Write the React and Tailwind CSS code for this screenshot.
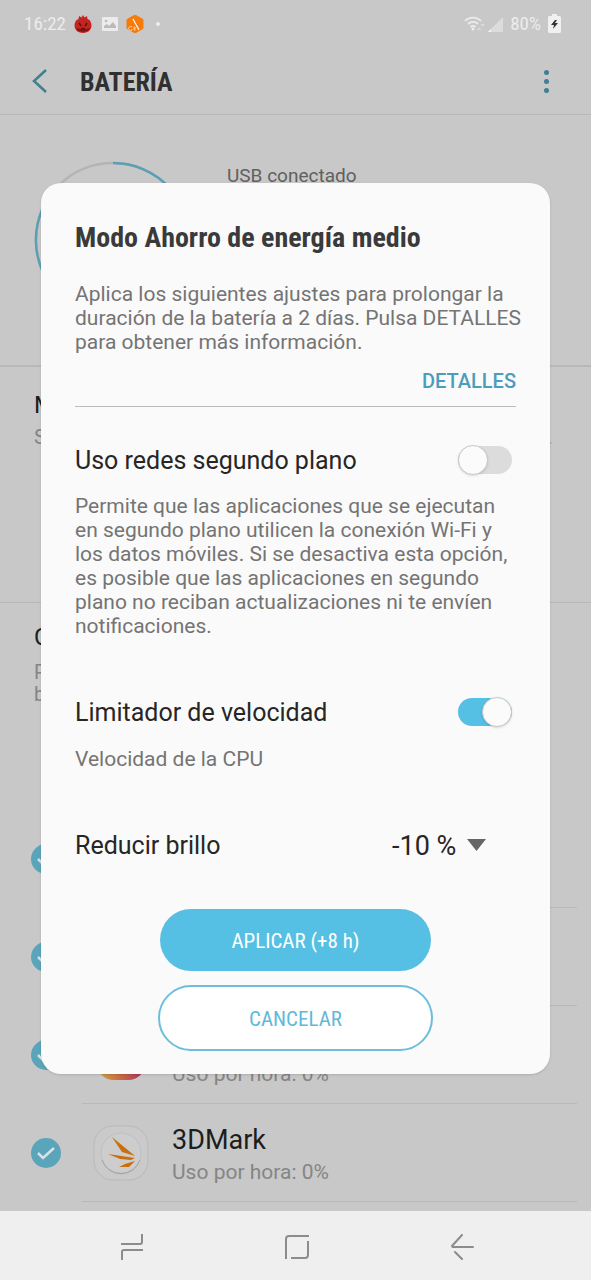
import { useState } from "react";

const apps = [
  { name: "Google", icon: "" },
  { name: "Gmail", icon: "" },
  { name: "Instagram", icon: "instagram" },
  { name: "3DMark", icon: "3dmark" },
];

const StatusBar = () => {
  return (
    <div className="flex h-12 items-center justify-between pr-[30px] pl-6 font-['Roboto_Condensed',Roboto,sans-serif] text-[19px] text-[#ececec]">
      <div className="flex items-center gap-2">
        <span>16:22</span>
        <svg className="size-[18px]" viewBox="0 0 18 18">
          <path
            d="M9 0l1.500 2.500L13 1l.5 3 2 1c4 5 2 13-6.500 13S-1.500 10 2.500 5l2-1L5 1l2.500 1.500z"
            fill="#c3241f"
          />
          <path d="M2 13c2 5 12 5 14 0l-4 1H6z" fill="#7d1413" />
          <path d="M5 8l2 3M13 8l-2 3" stroke="#5a0f0f" strokeWidth="1.500" />
          <path d="M7 14l2-1 2 1" fill="none" stroke="#4a0d0d" />
        </svg>
        <svg className="ml-0.5 h-[14px] w-[16px]" viewBox="0 0 16 14">
          <rect width="16" height="14" rx="1" fill="#ececec" />
          <path d="M2 11V9l3-2 2 2 4-4 3 4v2z" fill="#bbb" />
          <circle cx="4" cy="4" r="1.300" fill="#bbb" />
        </svg>
        <svg className="size-[18px]" viewBox="0 0 18 18">
          <path d="M9 0l8 4.500v9L9 18l-8-4.500v-9z" fill="#f57c0a" stroke="#f57c0a" strokeLinejoin="round" />
          <path d="M7 4l6 11" stroke="#fff" strokeWidth="1.200" />
          <path d="M6 12a2 2 0 1 0 0 3v-1M8 15v-3h1v3z" fill="none" stroke="#fbd0a0" />
        </svg>
        <span className="ml-1 size-1 rounded-full bg-[#ececec]" />
      </div>
      <div className="flex items-center gap-[7px]">
        <svg className="h-[18px] w-[39px]" viewBox="0 0 39 18">
          <g fill="none" stroke="#ececec" strokeWidth="1.800">
            <path d="M1 6a11 11 0 0 1 16 0M4 9a7 7 0 0 1 10 0M6.500 12a4 4 0 0 1 5 0" />
          </g>
          <circle cx="9" cy="14" r="1.500" fill="#ececec" />
          <path d="M15 12l2.500 3h-5zM16 9h5l-2.500 3z" fill="#d8d8d8" />
          <path d="M39 2v15H24z" fill="#dcdcdc" />
          <path d="M27 14v3h-3z" fill="#f4f4f4" />
        </svg>
        <span>80%</span>
        <svg className="h-5 w-[13px]" viewBox="0 0 13 20">
          <path d="M4 0h5v2h3l1 1v15l-1 1H1l-1-1V3l1-1h3z" fill="#f0f0f0" />
          <path d="M7 6l-4 5h3l-1 4 5-6H7l2-3z" fill="#333" />
        </svg>
      </div>
    </div>
  );
};

const AppIcon = ({ icon }) => {
  if (icon === "3dmark") {
    return (
      <svg className="size-14" viewBox="0 0 56 56">
        <rect x="1" y="1" width="54" height="54" rx="19" fill="#cacaca" stroke="#b9b9b9" />
        <circle cx="28" cy="28" r="20" fill="#cdcdcd" stroke="#c0c0c0" />
        <path d="M9 35a20 20 0 0 0 38 0" fill="none" stroke="#9ba3ab" />
        <path d="M19 12l23 19-13-4zM15 29l27 4-4 2-11-1zM42 36l-6 6-10 0 6-3z" fill="#c96f0b" />
      </svg>
    );
  }
  if (icon === "instagram") {
    return (
      <span className="m-[3px] size-[50px] rounded-[18px] bg-linear-to-r from-[#c9a84f] via-[#c9693e] to-[#a8205f]" />
    );
  }
  return <span className="size-14" />;
};

const AppRow = ({ app }) => {
  return (
    <li className="flex h-[98px] items-center">
      <label className="ml-[31px] flex">
        <input type="checkbox" defaultChecked aria-label={app.name} className="peer sr-only" />
        <svg className="size-[30px]" viewBox="0 0 30 30">
          <circle cx="15" cy="15" r="15" fill="#5ba5ba" />
          <path d="M7 15l5 5 11-10" fill="none" stroke="#d6e2e6" strokeWidth="2.500" />
        </svg>
      </label>
      <div className="mr-[14px] ml-[21px] flex h-full flex-1 items-center border-b border-[#b8b8b8] pl-[11px]">
        <AppIcon icon={app.icon} />
        <div className="ml-[23px] pt-1.5">
          <p className="text-[27px] leading-8 text-[#1d1d1d]">{app.name}</p>
          <p className="text-[21px] leading-8 text-[#858585]">Uso por hora: 0%</p>
        </div>
      </div>
    </li>
  );
};

const Switch = ({ id, checked, onChange }) => {
  return (
    <input
      id={id}
      type="checkbox"
      role="switch"
      checked={checked}
      onChange={(e) => onChange(e.target.checked)}
      className="mr-1 flex h-7 w-[54px] shrink-0 appearance-none items-center rounded-full bg-[#dcdcdc] before:size-[30px] before:shrink-0 before:rounded-full before:border before:border-[#c9c9c9] before:bg-[#fbfbfb] before:shadow-sm before:content-[''] checked:justify-end checked:bg-[#56bfe4]"
    />
  );
};

const BatteryPage = () => {
  return (
    <div className="flex-1 bg-[#c8c8c8]">
      <StatusBar />
      <header className="flex h-[67px] items-center border-b border-[#b8b8b8] pr-9 pl-8">
        <button aria-label="Atrás">
          <svg className="h-6 w-4" viewBox="0 0 16 24" fill="none" stroke="#3f7f92" strokeWidth="2.500">
            <path d="M14 1L2 12l12 11" />
          </svg>
        </button>
        <h1 className="ml-8 flex-1 pt-0.5 font-['Roboto_Condensed',Roboto,sans-serif] text-[26px] font-bold text-[#303030]">
          BATERÍA
        </h1>
        <button aria-label="Más opciones" className="flex w-[18px] flex-col items-center gap-1">
          <span className="size-[5px] rounded-full bg-[#3f7f92]" />
          <span className="size-[5px] rounded-full bg-[#3f7f92]" />
          <span className="size-[5px] rounded-full bg-[#3f7f92]" />
        </button>
      </header>
      <section className="flex h-[252px] items-start border-b-2 border-[#b8b8b8] pt-[46px] pl-[34px]">
        <svg className="size-[158px]" viewBox="0 0 158 158" fill="none" strokeWidth="2.500">
          <circle cx="79" cy="79" r="77" stroke="#b4b4b4" />
          <path d="M79 2A77 77 0 1 1 8 49" stroke="#5b9fb2" />
        </svg>
        <p className="ml-[35px] text-[19px] leading-[30px] text-[#606060]">USB conectado</p>
      </section>
      <section className="h-[236px] border-b border-[#b8b8b8] px-[34px] pt-[22px]">
        <h2 className="text-[24px] leading-8 text-[#1d1d1d]">Modo de energía</h2>
        <p className="text-[21px] leading-8 whitespace-nowrap text-[#858585]">
          Selecciona estos ajustes para prolongar más tu batería.
        </p>
      </section>
      <section className="pt-[18px] pb-2">
        <div className="h-[189px] px-[34px]">
          <h2 className="text-[24px] leading-8 text-[#1d1d1d]">Control de energía</h2>
          <p className="mt-2 text-[20px] leading-[22px] text-[#858585]">
            Prolonga la duración de la
            <br />
            batería del teléfono.
          </p>
        </div>
        <ul>
          {apps.map((app) => (
            <AppRow key={app.name} app={app} />
          ))}
        </ul>
      </section>
    </div>
  );
};

const NavBar = () => {
  return (
    <nav className="flex h-[69px] items-center justify-between bg-[#efefef] pt-0.5 pr-[117px] pl-[120px] text-[#8c8c8c]">
      <button aria-label="Recientes">
        <svg className="h-[26px] w-6" viewBox="0 0 24 26" fill="none" stroke="currentColor" strokeWidth="2">
          <path d="M1 10h19q2 0 2-2V0M23 16H4q-2 0-2 2v8" />
        </svg>
      </button>
      <button aria-label="Inicio">
        <svg className="size-6" viewBox="0 0 24 24" fill="none" stroke="currentColor" strokeWidth="2">
          <path d="M1 24V4q0-3 3-3h20M23 6v14q0 3-3 3H6" />
        </svg>
      </button>
      <button aria-label="Volver">
        <svg
          className="h-[26px] w-6"
          viewBox="0 0 24 26"
          fill="none"
          stroke="currentColor"
          strokeWidth="2"
          strokeLinecap="round"
        >
          <path d="M12 1L2 12q0 1 1 1h20M5 18l7 7" />
        </svg>
      </button>
    </nav>
  );
};

const PowerModeDialog = () => {
  const [background, setBackground] = useState(false);
  const [limiter, setLimiter] = useState(true);
  const [brightness, setBrightness] = useState("-10 %");

  return (
    <div
      role="dialog"
      aria-labelledby="dialog-title"
      className="w-full rounded-[20px] bg-[#fafafa] px-[34px] pt-[37px] pb-[23px] shadow"
    >
      <h2
        id="dialog-title"
        className="font-['Roboto_Condensed',Roboto,sans-serif] text-[28px] leading-9 font-bold text-[#3a3a3a]"
      >
        Modo Ahorro de energía medio
      </h2>
      <p className="mt-[26px] -mr-2 text-[21px] leading-6 text-[#747474]">
        Aplica los siguientes ajustes para prolongar la duración de la batería a 2 días. Pulsa
        DETALLES para obtener más información.
      </p>
      <div className="flex justify-end border-b border-[#bcbcbc] pt-[13px] pb-[11px]">
        <button className="text-[20px] leading-7 font-medium text-[#4a9dbd]">DETALLES</button>
      </div>

      <div className="mt-[35px] flex h-9 items-center justify-between">
        <label htmlFor="background" className="pt-0.5 text-[25px] text-[#262626]">
          Uso redes segundo plano
        </label>
        <Switch id="background" checked={background} onChange={setBackground} />
      </div>
      <p className="mt-4 text-[21px] leading-6 text-[#747474]">
        Permite que las aplicaciones que se ejecutan en segundo plano utilicen la conexión Wi-Fi y
        los datos móviles. Si se desactiva esta opción, es posible que las aplicaciones en segundo
        plano no reciban actualizaciones ni te envíen notificaciones.
      </p>

      <div className="mt-14 flex h-9 items-center justify-between">
        <label htmlFor="limiter" className="pt-0.5 text-[25px] text-[#262626]">
          Limitador de velocidad
        </label>
        <Switch id="limiter" checked={limiter} onChange={setLimiter} />
      </div>
      <p className="mt-[17px] text-[21px] leading-6 text-[#747474]">Velocidad de la CPU</p>

      <div className="mt-14 flex h-9 items-center justify-between">
        <label htmlFor="brightness" className="pt-0.5 text-[25px] text-[#262626]">
          Reducir brillo
        </label>
        <div className="relative mr-[30px] flex items-center">
          <select
            id="brightness"
            value={brightness}
            onChange={(e) => setBrightness(e.target.value)}
            className="w-[94px] appearance-none bg-transparent pt-0.5 text-[27px] leading-9 text-[#262626]"
          >
            <option>-10 %</option>
            <option>-5 %</option>
            <option>0 %</option>
          </select>
          <svg className="pointer-events-none absolute right-0 h-3 w-[19px]" viewBox="0 0 19 12">
            <path d="M0 0h19l-9.500 12z" fill="#666" />
          </svg>
        </div>
      </div>

      <div className="mt-[46px] flex flex-col items-center gap-[14px] font-['Roboto_Condensed',Roboto,sans-serif] text-[21px]">
        <button className="h-[62px] w-[271px] rounded-full bg-[#56bfe4] pt-1 text-white">
          APLICAR (+8 h)
        </button>
        <button className="h-[66px] w-[275px] rounded-full border-2 border-[#6bbfdc] bg-white pt-1 text-[#5fb9d8]">
          CANCELAR
        </button>
      </div>
    </div>
  );
};

export default function App() {
  return (
    <div className="relative flex min-h-screen flex-col overflow-hidden font-[Roboto,sans-serif]">
      <BatteryPage />
      <NavBar />
      <div className="absolute inset-0 flex items-start px-[41px] pt-[183px]">
        <PowerModeDialog />
      </div>
    </div>
  );
}
